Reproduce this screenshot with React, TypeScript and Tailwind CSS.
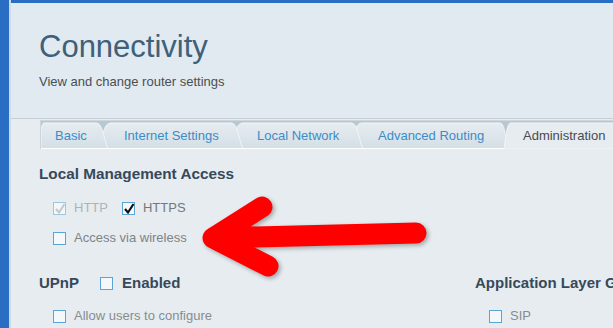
const tabs = [
  { label: "Basic", w: 67, lt: 0, rt: 57, ml: 0, pl: 14, z: "z-[5]" },
  { label: "Internet Settings", w: 143, lt: 8, rt: 133, ml: -8, pl: 24, z: "z-[4]" },
  { label: "Local Network", w: 131, lt: 8, rt: 121, ml: -11, pl: 25, z: "z-[3]" },
  { label: "Advanced Routing", w: 157, lt: 8, rt: 151, ml: -12, pl: 27, z: "z-[2]" },
]

function tabPath(w: number, lt: number, rt: number, h: number, top: number) {
  const left = `M0,${h} C${lt * 0.4},${h * 0.45} ${lt * 0.5},${top} ${lt + 3},${top}`
  const right = `L${rt - 2},${top} C${rt + (w - rt) * 0.45},${top} ${rt + (w - rt) * 0.5},${h * 0.55} ${w},${h}`
  return `${left} ${right} Z`
}

function Tab({
  label,
  w,
  lt,
  rt,
  ml,
  pl,
  z,
  id,
}: {
  label: string
  w: number
  lt: number
  rt: number
  ml: number
  pl: number
  z: string
  id: string
}) {
  const d = tabPath(w, lt, rt, 28, 2)
  return (
    <div className={`relative h-[28px] shrink-0 flex items-center pt-[2px] ${z}`} style={{ width: w, marginLeft: ml }}>
      <svg className="absolute inset-0" width={w} height={28} viewBox={`0 0 ${w} 28`}>
        <defs>
          <linearGradient id={id} x1="0" y1="0" x2="0" y2="1">
            <stop offset="0" stopColor="#e6edf1" />
            <stop offset="1" stopColor="#d3dee5" />
          </linearGradient>
        </defs>
        <path d={d} fill={`url(#${id})`} stroke="#f3f6f8" strokeWidth="1" />
        <line x1="0" y1="27.5" x2={w} y2="27.5" stroke="#ffffff" strokeWidth="1" />
      </svg>
      <span className="relative text-[13px] text-[#3b8cc9] whitespace-nowrap" style={{ paddingLeft: pl }}>
        {label}
      </span>
    </div>
  )
}

function ActiveTab() {
  const d = "M0,28 C2,14 3,2 7,2 L140,2 L140,28 Z"
  return (
    <div className="relative h-[28px] w-[140px] shrink-0 ml-[-4px] z-10 flex items-center pt-[2px]">
      <svg className="absolute inset-0" width={140} height={28} viewBox="0 0 140 28">
        <path d={d} fill="#e6ecf0" stroke="#f3f6f8" strokeWidth="1" />
      </svg>
      <span className="relative pl-[19px] text-[13px] text-[#474b4e] whitespace-nowrap">Administration</span>
    </div>
  )
}

function Box({ checked, disabled }: { checked?: boolean; disabled?: boolean }) {
  return (
    <span
      className={`relative inline-block w-[13px] h-[13px] shrink-0 border bg-[#f4f8fa] ${
        disabled ? "border-[#9ec7df]" : "border-[#5aa5d3]"
      }`}
    >
      {checked && (
        <svg className="absolute left-[-1px] top-[-2px]" width="14" height="15" viewBox="0 0 14 15">
          <polyline
            points="3,8 6,11.5 11.5,3"
            fill="none"
            stroke={disabled ? "#c5cacd" : "#111"}
            strokeWidth="2.2"
          />
        </svg>
      )}
    </span>
  )
}

export default function App() {
  return (
    <div className="relative w-[613px] h-[328px] overflow-hidden flex bg-[#e6ecf0] font-['Liberation_Sans',Arial,sans-serif]">
      <div className="w-[9px] shrink-0 bg-[#2a6ec3]" />
      <div className="w-[2px] shrink-0 bg-[#cfdbe4]" />

      <div className="flex-1 min-w-0 flex flex-col">
        <div className="h-[3px] shrink-0 bg-[#2a6ec3]" />

        {/* Page header */}
        <div className="h-[116px] shrink-0 bg-[#e0eaf0] border-b border-[#c5ced4] pl-[28px] pt-[26px]">
          <h1 className="text-[31px] leading-[36px] text-[#3e607a]">Connectivity</h1>
          <p className="mt-[9px] text-[13px] leading-[16px] text-[#4a4f53]">View and change router settings</p>
        </div>

        {/* Tabs */}
        <div className="ml-[29px] mt-[1px] h-[29px] border-l border-t border-[#cdd6dc] bg-[#b8c8d1] flex">
          {tabs.map((t, i) => (
            <Tab key={t.label} {...t} id={`tabgrad${i}`} />
          ))}
          <ActiveTab />
        </div>

        {/* Settings */}
        <div className="pl-[28px] pt-[16px]">
          <h2 className="text-[15.3px] leading-[18px] font-bold text-[#36495b]">Local Management Access</h2>

          <div className="mt-[17px] pl-[14px] h-[16px] flex items-center text-[13px]">
            <Box checked disabled />
            <span className="ml-[8px] text-[#aeb3b7]">HTTP</span>
            <span className="ml-[14px] flex">
              <Box checked />
            </span>
            <span className="ml-[8px] text-[#72787d]">HTTPS</span>
          </div>

          <div className="mt-[14px] pl-[14px] h-[16px] flex items-center text-[13px]">
            <Box />
            <span className="ml-[8px] text-[#7e8387]">Access via wireless</span>
          </div>

          <div className="mt-[28px] flex">
            <div className="w-[436px] shrink-0">
              <div className="h-[18px] flex items-center text-[15px] font-bold text-[#36495b]">
                <span>UPnP</span>
                <span className="ml-[21px] flex">
                  <Box />
                </span>
                <span className="ml-[9px]">Enabled</span>
              </div>
              <div className="mt-[16px] pl-[14px] h-[16px] flex items-center text-[13px]">
                <Box />
                <span className="ml-[8px] text-[#878c90]">Allow users to configure</span>
              </div>
            </div>
            <div className="shrink-0">
              <div className="h-[18px] flex items-center text-[15px] font-bold text-[#36495b] whitespace-nowrap">
                Application Layer Gateway
              </div>
              <div className="mt-[16px] pl-[14px] h-[16px] flex items-center text-[13px]">
                <Box />
                <span className="ml-[8px] text-[#878c90]">SIP</span>
              </div>
            </div>
          </div>
        </div>
      </div>

      {/* Red annotation arrow */}
      <svg
        className="absolute left-0 top-0 pointer-events-none drop-shadow-[2px_2px_2px_rgba(0,0,0,0.3)]"
        width="613"
        height="328"
        viewBox="0 0 613 328"
      >
        <path
          d="M416,233 L213,238 M262,207 L213,238 L268,266"
          fill="none"
          stroke="#ff0000"
          strokeWidth="21"
          strokeLinecap="round"
          strokeLinejoin="round"
        />
      </svg>
    </div>
  )
}
